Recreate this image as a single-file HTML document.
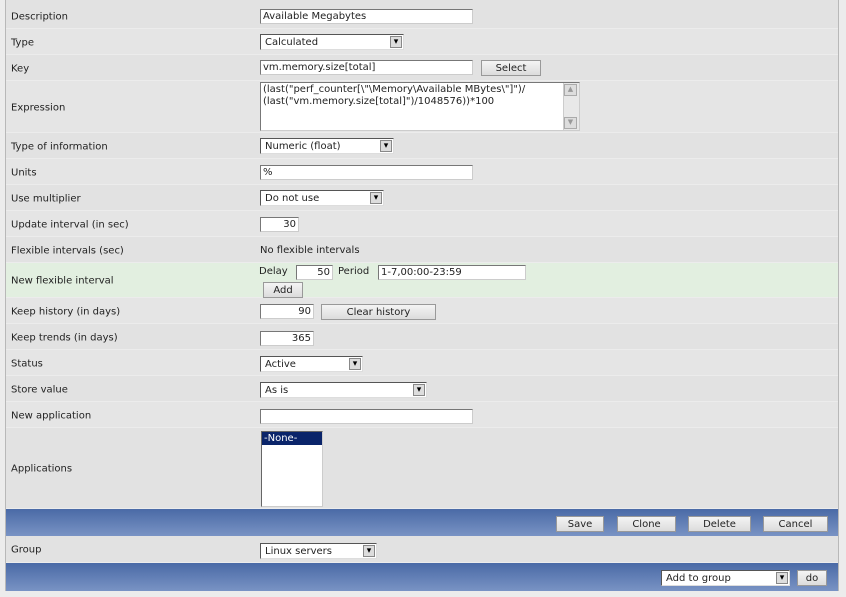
<!DOCTYPE html>
<html><head><style>
body{margin:0;width:846px;height:597px;background:#ececec;font-family:"DejaVu Sans","Liberation Sans",sans-serif;font-size:10px;color:#222;position:relative;overflow:hidden}
.tbl{position:absolute;left:5px;top:0;width:832px;height:591px;border-left:1px solid #b8b8b8;border-right:1px solid #b8b8b8;background:#e2e2e2}
.r{position:absolute;left:6px;width:832px;background:#e2e2e2;border-bottom:1px solid #ececec;box-sizing:border-box}
.r.alt{background:#e5e5e5}
.r .l{position:absolute;left:5px;top:50%;transform:translateY(-40%)}
.a{position:absolute}
.inp{position:absolute;background:#fff;border:1px solid #777;border-right-color:#ccc;border-bottom-color:#ccc;box-sizing:border-box;height:15px;font-size:10px;line-height:14px;padding:0 2px;white-space:nowrap;overflow:hidden}
.num{text-align:right}
.sel{position:absolute;background:#fff;border:1px solid #555;box-sizing:border-box;height:16px;font-size:10px;line-height:15px;padding-left:4px;border-right-color:#ddd;border-bottom-color:#ddd}
.sel:after{content:"▾";position:absolute;right:1px;top:1px;width:12px;height:12px;background:#ddd;border:1px solid #888;box-sizing:border-box;font-size:9px;line-height:10px;text-align:center;color:#000}
.btn{position:absolute;background:linear-gradient(#f4f4f4,#dcdcdc);border:1px solid #999;box-sizing:border-box;height:16px;font-size:10px;line-height:15px;text-align:center;color:#222}
.blue{position:absolute;left:6px;width:832px;background:linear-gradient(#4a6aa6,#7993c4)}
</style></head><body>
<div class="tbl"></div>
<div class="r" style="top:3px;height:26px"><span class="l">Description</span></div>
<div class="inp" style="left:260px;top:9px;width:213px">Available Megabytes</div>
<div class="r alt" style="top:29px;height:26px"><span class="l">Type</span></div>
<div class="sel" style="left:260px;top:34px;width:144px">Calculated</div>
<div class="r" style="top:55px;height:26px"><span class="l">Key</span></div>
<div class="inp" style="left:260px;top:60px;width:213px">vm.memory.size[total]</div>
<div class="btn" style="left:481px;top:60px;width:60px">Select</div>
<div class="r alt" style="top:81px;height:52px"><span class="l">Expression</span></div>
<div class="inp" style="left:260px;top:82px;width:320px;height:49px;white-space:pre;line-height:12px;padding-top:1px">(last("perf_counter[\"\Memory\Available MBytes\"]")/
(last("vm.memory.size[total]")/1048576))*100</div>
<div class="a" style="left:563px;top:83px;width:15px;height:47px;background:#e8e8e8;border-left:1px solid #ccc"></div>
<div class="a" style="left:564px;top:84px;width:13px;height:12px;background:#ddd;border:1px solid #aaa;box-sizing:border-box;font-size:7px;text-align:center;color:#999">▲</div>
<div class="a" style="left:564px;top:117px;width:13px;height:12px;background:#ddd;border:1px solid #aaa;box-sizing:border-box;font-size:7px;text-align:center;color:#999">▼</div>
<div class="r" style="top:133px;height:26px"><span class="l">Type of information</span></div>
<div class="sel" style="left:260px;top:138px;width:134px">Numeric (float)</div>
<div class="r alt" style="top:159px;height:26px"><span class="l">Units</span></div>
<div class="inp" style="left:260px;top:165px;width:213px">%</div>
<div class="r" style="top:185px;height:26px"><span class="l">Use multiplier</span></div>
<div class="sel" style="left:260px;top:190px;width:124px">Do not use</div>
<div class="r alt" style="top:211px;height:26px"><span class="l">Update interval (in sec)</span></div>
<div class="inp num" style="left:260px;top:217px;width:39px">30</div>
<div class="r" style="top:237px;height:26px"><span class="l">Flexible intervals (sec)</span></div>
<div class="a" style="left:260px;top:245px">No flexible intervals</div>
<div class="r" style="top:263px;height:35px;background:#e2efe0"><span class="l">New flexible interval</span></div>
<div class="a" style="left:259px;top:266px">Delay</div>
<div class="inp num" style="left:296px;top:265px;width:37px">50</div>
<div class="a" style="left:338px;top:266px">Period</div>
<div class="inp" style="left:378px;top:265px;width:148px">1-7,00:00-23:59</div>
<div class="btn" style="left:263px;top:282px;width:40px">Add</div>
<div class="r alt" style="top:298px;height:26px"><span class="l">Keep history (in days)</span></div>
<div class="inp num" style="left:260px;top:304px;width:54px">90</div>
<div class="btn" style="left:321px;top:304px;width:115px">Clear history</div>
<div class="r" style="top:324px;height:26px"><span class="l">Keep trends (in days)</span></div>
<div class="inp num" style="left:260px;top:331px;width:54px">365</div>
<div class="r alt" style="top:350px;height:26px"><span class="l">Status</span></div>
<div class="sel" style="left:260px;top:356px;width:103px">Active</div>
<div class="r" style="top:376px;height:26px"><span class="l">Store value</span></div>
<div class="sel" style="left:260px;top:382px;width:167px">As is</div>
<div class="r alt" style="top:402px;height:26px"><span class="l">New application</span></div>
<div class="inp" style="left:260px;top:409px;width:213px"></div>
<div class="r" style="top:428px;height:81px"><span class="l">Applications</span></div>
<div class="a" style="left:261px;top:431px;width:62px;height:76px;background:#fff;border:1px solid #666;border-right-color:#ccc;border-bottom-color:#ccc;box-sizing:border-box"><div style="background:#0a246a;color:#fff;padding-left:2px;line-height:13px">-None-</div></div>
<div class="blue" style="top:509px;height:27px"></div>
<div class="btn" style="left:556px;top:516px;width:48px">Save</div>
<div class="btn" style="left:617px;top:516px;width:59px">Clone</div>
<div class="btn" style="left:688px;top:516px;width:63px">Delete</div>
<div class="btn" style="left:763px;top:516px;width:65px">Cancel</div>
<div class="r" style="top:536px;height:27px"><span class="l">Group</span></div>
<div class="sel" style="left:260px;top:543px;width:117px">Linux servers</div>
<div class="blue" style="top:563px;height:28px"></div>
<div class="sel" style="left:661px;top:570px;width:129px">Add to group</div>
<div class="btn" style="left:797px;top:570px;width:30px">do</div>
</body></html>
